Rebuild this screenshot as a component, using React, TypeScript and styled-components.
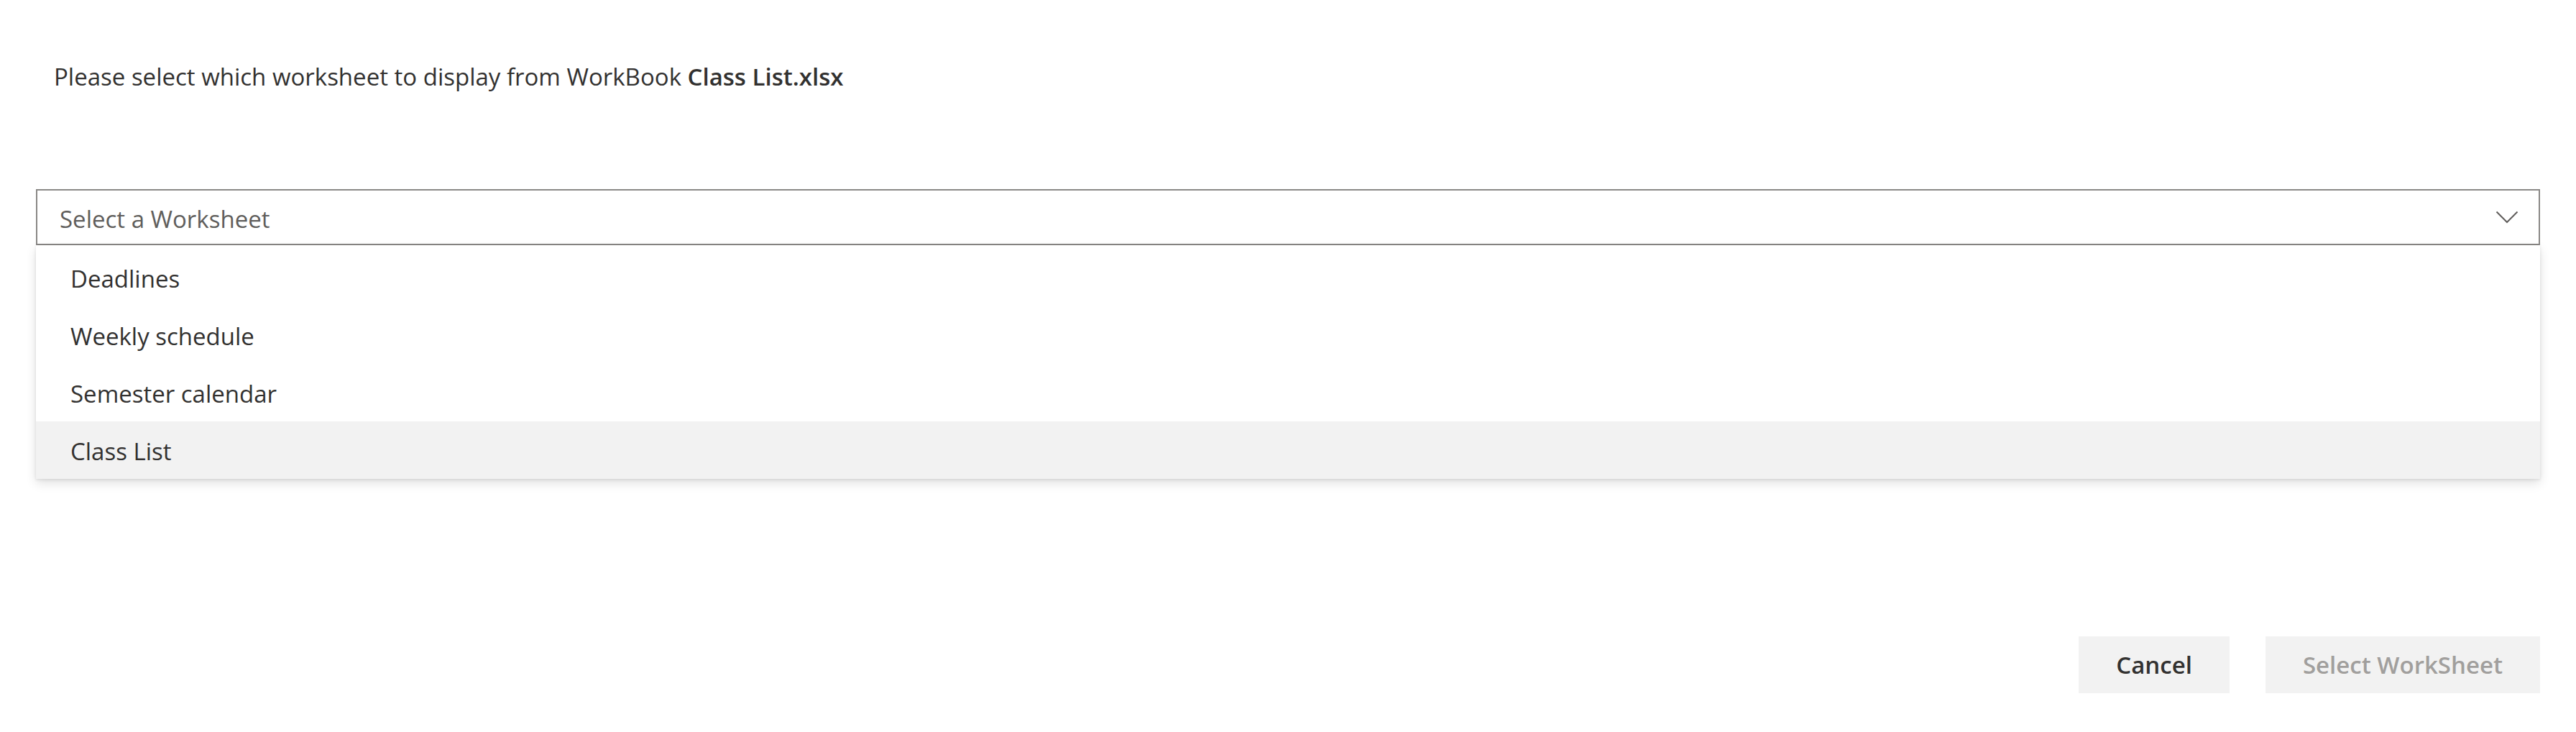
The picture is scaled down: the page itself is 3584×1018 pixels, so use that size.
import React from "react";
import styled, { createGlobalStyle } from "styled-components";

const Global = createGlobalStyle`
  html, body { margin: 0; padding: 0; background: #ffffff; }
  body { font-family: "Open Sans", "Noto Sans", sans-serif; color: #323130; }
`;

const Page = styled.div`
  display: flex;
  flex-direction: column;
  padding: 0 50px;
  width: 3584px;
  box-sizing: border-box;
`;

const Message = styled.p`
  margin: 85px 0 0 25px;
  font-size: 33px;
  line-height: 44px;
  color: #323130;
  font-weight: 400;
  b { font-weight: 600; }
`;

const Dropdown = styled.div`
  margin-top: 134px;
  display: flex;
  flex-direction: column;
`;

const Title = styled.div`
  height: 78px;
  box-sizing: border-box;
  border: 2px solid #8a8886;
  display: flex;
  align-items: center;
  justify-content: space-between;
  padding: 4px 28px 0 31px;
  font-size: 33px;
  color: #605e5c;
`;

const Chevron = styled.svg`
  width: 32px;
  height: 18px;
  display: block;
  margin-top: -4px;
`;

const List = styled.div`
  display: flex;
  flex-direction: column;
  padding-top: 5px;
  background: #ffffff;
  box-shadow: 0 6px 14px rgba(0, 0, 0, 0.12), 0 1px 4px rgba(0, 0, 0, 0.1);
`;

const Item = styled.div<{ $selected?: boolean }>`
  height: 80px;
  display: flex;
  align-items: center;
  padding: 2px 0 0 48px;
  box-sizing: border-box;
  font-size: 33px;
  color: #323130;
  background: ${(p) => (p.$selected ? "#f2f2f2" : "#ffffff")};
`;

const Footer = styled.div`
  margin-top: 219px;
  display: flex;
  justify-content: flex-end;
  gap: 50px;
`;

const Button = styled.button<{ $disabled?: boolean }>`
  height: 79px;
  border: none;
  background: #f2f2f2;
  font-family: "Open Sans", "Noto Sans", sans-serif;
  font-size: 33px;
  font-weight: 600;
  color: ${(p) => (p.$disabled ? "#a19f9d" : "#323130")};
  padding: 0 52px;
  cursor: ${(p) => (p.$disabled ? "default" : "pointer")};
`;

const sheets = ["Deadlines", "Weekly schedule", "Semester calendar", "Class List"];

export default function App() {
  return (
    <>
      <Global />
      <Page>
        <Message>
          Please select which worksheet to display from WorkBook <b>Class List.xlsx</b>
        </Message>
        <Dropdown>
          <Title>
            <span>Select a Worksheet</span>
            <Chevron viewBox="0 0 32 18" fill="none">
              <path d="M1.5 1.5 L16 16 L30.5 1.5" stroke="#605e5c" strokeWidth="2" />
            </Chevron>
          </Title>
          <List>
            {sheets.map((s) => (
              <Item key={s} $selected={s === "Class List"}>
                {s}
              </Item>
            ))}
          </List>
        </Dropdown>
        <Footer>
          <Button>Cancel</Button>
          <Button $disabled>Select WorkSheet</Button>
        </Footer>
      </Page>
    </>
  );
}
